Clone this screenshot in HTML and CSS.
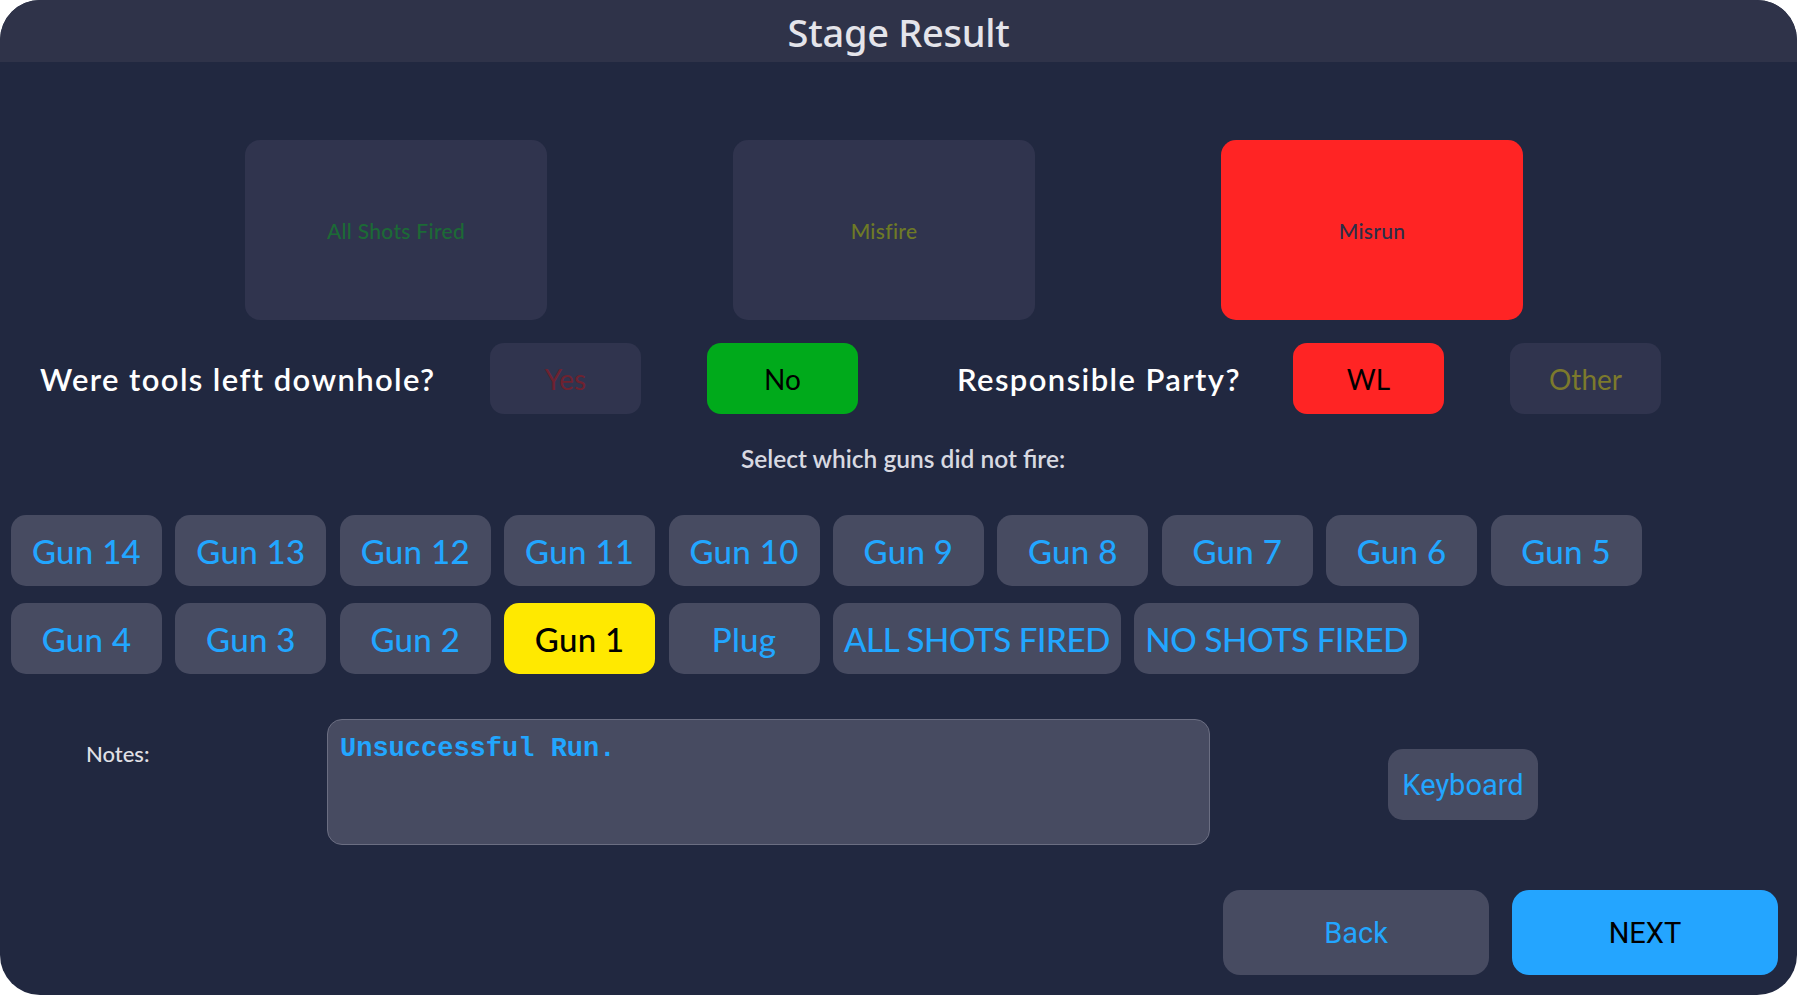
FILE: index.html
```html
<!DOCTYPE html>
<html lang="en">
<head>
<meta charset="utf-8">
<title>Stage Result</title>
<link rel="stylesheet" href="styles.css">
</head>
<body>
<div class="app">
  <header class="titlebar">Stage Result</header>
  <main class="content">
    <section class="outcomes">
      <div class="tile tile-all">All Shots Fired</div>
      <div class="tile tile-misfire">Misfire</div>
      <div class="tile tile-misrun">Misrun</div>
    </section>

    <section class="questions">
      <span class="q-label q-tools">Were tools left downhole?</span>
      <button class="choice choice-yes">Yes</button>
      <button class="choice choice-no">No</button>
      <span class="q-label q-party">Responsible Party?</span>
      <button class="choice choice-wl">WL</button>
      <button class="choice choice-other">Other</button>
    </section>

    <p class="prompt">Select which guns did not fire:</p>

    <section class="guns">
      <button class="gun">Gun 14</button>
      <button class="gun">Gun 13</button>
      <button class="gun">Gun 12</button>
      <button class="gun">Gun 11</button>
      <button class="gun">Gun 10</button>
      <button class="gun">Gun 9</button>
      <button class="gun">Gun 8</button>
      <button class="gun">Gun 7</button>
      <button class="gun">Gun 6</button>
      <button class="gun">Gun 5</button>
      <button class="gun">Gun 4</button>
      <button class="gun">Gun 3</button>
      <button class="gun">Gun 2</button>
      <button class="gun gun-selected">Gun 1</button>
      <button class="gun">Plug</button>
      <button class="gun gun-wide">ALL SHOTS FIRED</button>
      <button class="gun gun-wide">NO SHOTS FIRED</button>
    </section>

    <section class="notes-row">
      <span class="notes-label">Notes:</span>
      <div class="notes-box">Unsuccessful Run.</div>
      <button class="keyboard">Keyboard</button>
    </section>

    <footer class="actions">
      <button class="action action-back">Back</button>
      <button class="action action-next">NEXT</button>
    </footer>
  </main>
</div>
</body>
</html>
```

FILE: styles.css
```css
html, body {
  margin: 0;
  padding: 0;
  background: #ffffff;
}

body {
  width: 1797px;
  height: 995px;
  overflow: hidden;
}

.app {
  width: 1797px;
  height: 995px;
  border-radius: 40px;
  overflow: hidden;
  background: #212840;
  display: flex;
  flex-direction: column;
  font-family: Lato, "Noto Sans", sans-serif;
}

.titlebar {
  height: 62px;
  flex: 0 0 62px;
  background: #2f3349;
  color: #e4e4ea;
  font-family: "Noto Sans", "Open Sans", sans-serif;
  font-weight: 500;
  font-size: 38px;
  line-height: 64px;
  text-align: center;
  letter-spacing: -0.3px;
}

.content {
  flex: 1;
  display: flex;
  flex-direction: column;
}

button {
  font: inherit;
  border: none;
  margin: 0;
  padding: 0;
  cursor: pointer;
}

/* Outcome tiles */
.outcomes {
  display: flex;
  gap: 186px;
  padding-left: 245px;
  margin-top: 78px;
}

.tile {
  width: 302px;
  height: 180px;
  border-radius: 15px;
  background: #30344e;
  display: flex;
  align-items: center;
  justify-content: center;
  font-size: 21px;
  font-weight: 500;
  letter-spacing: 0.3px;
}

.tile-all { color: #1c6a36; }
.tile-misfire { color: #6e7a26; }
.tile-misrun { background: #ff2424; color: #2c2f48; }

/* Question row */
.questions {
  display: flex;
  align-items: center;
  margin-top: 23px;
  padding-left: 40px;
  height: 71px;
}

.q-label {
  color: #ffffff;
  font-size: 31px;
  font-weight: 600;
  letter-spacing: 1.4px;
  white-space: nowrap;
}

.q-tools { width: 395px; margin-right: 55px; }
.q-party { width: 282px; margin-left: 99px; margin-right: 54px; }

.choice {
  width: 151px;
  height: 71px;
  border-radius: 14px;
  font-size: 28px;
  background: #30344e;
}

.choice-yes { color: #6e2230; }
.choice-no { background: #00aa1b; color: #000000; margin-left: 66px; }
.choice-wl { background: #ff2424; color: #000000; }
.choice-other { color: #7c7a2c; margin-left: 66px; }

/* Prompt */
.prompt {
  margin: 30px 0 0 0;
  padding-left: 741px;
  color: #d8d9e1;
  font-size: 24.5px;
  font-weight: 600;
  line-height: 30px;
  height: 30px;
}

/* Guns grid */
.guns {
  display: flex;
  flex-wrap: wrap;
  column-gap: 13.4px;
  row-gap: 17px;
  padding-left: 11px;
  margin-top: 41px;
  width: 1700px;
}

.gun {
  width: 151px;
  height: 71px;
  border-radius: 15px;
  background: #474b61;
  color: #22a6ff;
  font-size: 33px;
  font-weight: 500;
  letter-spacing: 0.3px;
}

.gun-selected { background: #ffe900; color: #000000; }

.gun-wide {
  width: auto;
  padding: 0 11px;
  letter-spacing: -0.35px;
}

/* Notes */
.notes-row {
  display: flex;
  align-items: flex-start;
  margin-top: 45px;
}

.notes-label {
  margin-left: 86px;
  width: 241px;
  margin-top: 21px;
  color: #e0e0e6;
  font-size: 22px;
  font-weight: 500;
}

.notes-box {
  box-sizing: border-box;
  width: 883px;
  height: 126px;
  border: 1px solid #6b6e82;
  border-radius: 15px;
  background: #474b61;
  color: #22a6ff;
  font-family: "Liberation Mono", "Courier New", monospace;
  font-weight: 700;
  font-size: 27px;
  line-height: 31px;
  padding: 14px 12px;
}

.keyboard {
  margin-left: 178px;
  margin-top: 30px;
  width: 150px;
  height: 71px;
  border-radius: 15px;
  background: #474b61;
  color: #22a6ff;
  font-family: Roboto, "Noto Sans", sans-serif;
  font-size: 29px;
}

/* Actions */
.actions {
  display: flex;
  justify-content: flex-end;
  gap: 23px;
  padding-right: 19px;
  margin-top: 45px;
}

.action {
  width: 266px;
  height: 85px;
  border-radius: 17px;
  font-family: Roboto, "Noto Sans", sans-serif;
  font-size: 29px;
}

.action-back { background: #474b61; color: #22a6ff; }
.action-next { background: #24a5ff; color: #000000; }
```
